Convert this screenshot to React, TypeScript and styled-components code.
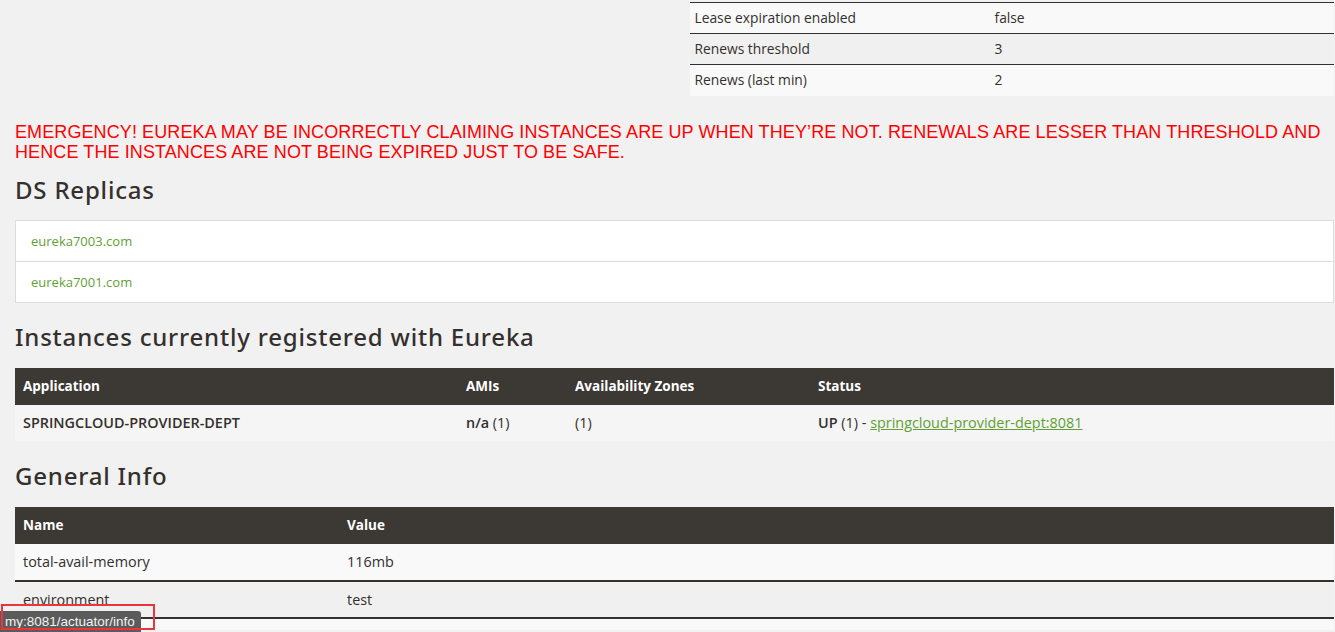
import { FC } from 'react';
import styled, { createGlobalStyle } from 'styled-components';

const GlobalStyle = createGlobalStyle`
  *, *::before, *::after {
    box-sizing: border-box;
  }
  html, body {
    margin: 0;
    padding: 0;
    background: #f1f1f1;
    overflow: hidden;
  }
  body {
    font-family: 'Open Sans', 'Liberation Sans', sans-serif;
    font-size: 14px;
    color: #34302d;
  }
`;

const Page = styled.div`
  padding: 2px 1px 0 15px;
  height: 630px;
`;

const TopRow = styled.div`
  display: grid;
  grid-template-columns: 1fr 1fr;
  column-gap: 30px;
`;

const StatsTable = styled.table`
  width: 100%;
  border-collapse: collapse;
  table-layout: fixed;
  font-size: 13.8px;
`;

const StatsRow = styled.tr<{ $striped?: boolean }>`
  background: ${p => (p.$striped ? '#f0f0f0' : '#f9f9f9')};
  border-top: 1px solid #34302d;
`;

const StatsCell = styled.td<{ $w?: string }>`
  height: 31px;
  padding: 0 5px;
  width: ${p => p.$w || 'auto'};
  vertical-align: middle;
  line-height: 28px;
`;

const Emergency = styled.h4`
  margin: 26px 0 0;
  color: #ff0000;
  font-family: 'Liberation Sans', sans-serif;
  font-size: 18px;
  font-weight: 400;
  line-height: 20px;
  letter-spacing: 0.1px;
  text-transform: uppercase;
`;

const Heading = styled.h1<{ $top: number }>`
  margin: ${p => p.$top}px 0 0;
  font-family: 'Noto Sans', 'DejaVu Sans', sans-serif;
  font-weight: 500;
  font-size: 24px;
  letter-spacing: 0.8px;
  line-height: 26px;
  color: #34302d;
`;

const ReplicaList = styled.ul`
  margin: 17px 0 0;
  padding: 0;
  list-style: none;
  background: #fff;
  border: 1px solid #dddddd;
`;

const ReplicaItem = styled.li`
  box-sizing: content-box;
  height: 40px;
  display: flex;
  align-items: center;
  padding: 0 15px;
  font-size: 13px;
  & + & {
    border-top: 1px solid #dddddd;
  }
`;

const GreenLink = styled.a<{ $underline?: boolean }>`
  color: #5fa134;
  text-decoration: ${p => (p.$underline ? 'underline' : 'none')};
`;

const DataTable = styled.table<{ $top: number }>`
  width: 100%;
  border-collapse: collapse;
  table-layout: fixed;
  margin-top: ${p => p.$top}px;
  font-size: 14.4px;
`;

const HeadCell = styled.th<{ $w?: string }>`
  background: #3c3834;
  color: #fff;
  font-size: 13.5px;
  font-weight: 700;
  text-align: left;
  height: 37px;
  padding: 0 8px;
  width: ${p => p.$w || 'auto'};
`;

const BodyRow = styled.tr<{ $bg: string; $line?: boolean }>`
  background: ${p => p.$bg};
  border-top: ${p => (p.$line ? '2px solid #34302d' : 'none')};
`;

const BodyCell = styled.td<{ $h?: number }>`
  height: ${p => p.$h || 37}px;
  padding: 0 8px;
  vertical-align: middle;
  white-space: nowrap;
`;

const Strong = styled.b`
  font-weight: 600;
`;

const StatusTip = styled.div`
  position: fixed;
  left: 0;
  bottom: 0;
  height: 21px;
  padding: 0 6px 0 5px;
  display: flex;
  align-items: center;
  background: #5b5b5b;
  color: #f2f2f2;
  font-family: 'Liberation Sans', sans-serif;
  font-size: 13.5px;
  border-top-right-radius: 3px;
`;

const Highlight = styled.div`
  position: fixed;
  left: 1px;
  top: 604px;
  width: 154px;
  height: 26px;
  border: 2px solid #e8363b;
  pointer-events: none;
`;

const stats = [
  ['Lease expiration enabled', 'false'],
  ['Renews threshold', '3'],
  ['Renews (last min)', '2'],
];

const info = [
  ['total-avail-memory', '116mb'],
  ['environment', 'test'],
  ['num-of-cpus', '4'],
];

const App: FC = () => (
  <>
    <GlobalStyle />
    <Page>
      <TopRow>
        <div />
        <StatsTable>
          <tbody>
            {stats.map(([k, v], i) => (
              <StatsRow key={k} $striped={i % 2 === 1}>
                <StatsCell $w="300px">{k}</StatsCell>
                <StatsCell>{v}</StatsCell>
              </StatsRow>
            ))}
          </tbody>
        </StatsTable>
      </TopRow>

      <Emergency>
        Emergency! Eureka may be incorrectly claiming instances are up when they’re not. Renewals are
        lesser than threshold and hence the instances are not being expired just to be safe.
      </Emergency>

      <Heading $top={15}>DS Replicas</Heading>
      <ReplicaList>
        <ReplicaItem>
          <GreenLink href="#">eureka7003.com</GreenLink>
        </ReplicaItem>
        <ReplicaItem>
          <GreenLink href="#">eureka7001.com</GreenLink>
        </ReplicaItem>
      </ReplicaList>

      <Heading $top={21}>Instances currently registered with Eureka</Heading>
      <DataTable $top={18}>
        <thead>
          <tr>
            <HeadCell $w="443px">Application</HeadCell>
            <HeadCell $w="109px">AMIs</HeadCell>
            <HeadCell $w="243px">Availability Zones</HeadCell>
            <HeadCell>Status</HeadCell>
          </tr>
        </thead>
        <tbody>
          <BodyRow $bg="#f5f5f5">
            <BodyCell $h={36}>
              <Strong>SPRINGCLOUD-PROVIDER-DEPT</Strong>
            </BodyCell>
            <BodyCell $h={36}>
              <Strong>n/a</Strong> (1)
            </BodyCell>
            <BodyCell $h={36}>(1)</BodyCell>
            <BodyCell $h={36}>
              <Strong>UP</Strong> (1) -{' '}
              <GreenLink $underline href="#">
                springcloud-provider-dept:8081
              </GreenLink>
            </BodyCell>
          </BodyRow>
        </tbody>
      </DataTable>

      <Heading $top={22}>General Info</Heading>
      <DataTable $top={18}>
        <thead>
          <tr>
            <HeadCell $w="324px">Name</HeadCell>
            <HeadCell>Value</HeadCell>
          </tr>
        </thead>
        <tbody>
          {info.map(([k, v], i) => (
            <BodyRow key={k} $bg={i % 2 === 1 ? '#f0f0f0' : '#f9f9f9'} $line={i > 0}>
              <BodyCell>{k}</BodyCell>
              <BodyCell>{v}</BodyCell>
            </BodyRow>
          ))}
        </tbody>
      </DataTable>
    </Page>
    <StatusTip>my:8081/actuator/info</StatusTip>
    <Highlight />
  </>
);

export default App;
